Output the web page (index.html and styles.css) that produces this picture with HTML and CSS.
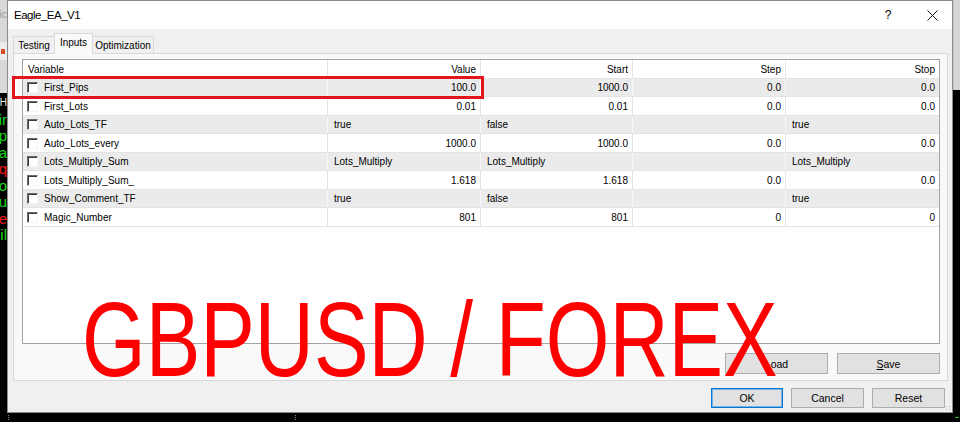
FILE: index.html
```html
<!DOCTYPE html>
<html>
<head>
<meta charset="utf-8">
<link rel="stylesheet" href="styles.css">
</head>
<body>
<div class="screen">
  <div class="main">
    <div class="strip-left">
      <div class="chrome-l">
        <div class="cl-text">ic</div>
        <div class="cl-bar"><span class="cl-icon"></span></div>
      </div>
      <div class="chart-text">
        <div class="ct"><span class="w sm">H</span></div>
        <div class="ct"><span class="g">ir</span></div>
        <div class="ct"><span class="g">p</span></div>
        <div class="ct"><span class="g">a</span></div>
        <div class="ct"><span class="r">q</span></div>
        <div class="ct"><span class="g">o</span></div>
        <div class="ct"><span class="g">u</span></div>
        <div class="ct"><span class="r">e</span></div>
        <div class="ct"><span class="g">il</span></div>
      </div>
    </div>

    <div class="dialog">
      <div class="titlebar">
        <div class="title">Eagle_EA_V1</div>
        <div class="cap-btn help">?</div>
        <div class="cap-btn close">
          <svg width="11" height="11" viewBox="0 0 11 11"><path d="M0.5 0.5 L10.5 10.5 M10.5 0.5 L0.5 10.5" stroke="#111" stroke-width="1" fill="none"/></svg>
        </div>
      </div>
      <div class="dbody">
        <div class="tabs">
          <div class="tab t-testing">Testing</div>
          <div class="tab active t-inputs">Inputs</div>
          <div class="tab t-opt">Optimization</div>
        </div>
        <div class="panel">
          <div class="grid-box">
            <div class="row head">
              <div class="c">Variable</div>
              <div class="c r">Value</div>
              <div class="c r">Start</div>
              <div class="c r">Step</div>
              <div class="c r last">Stop</div>
            </div>
            <div class="row odd">
              <div class="c var"><span class="cb"></span>First_Pips</div>
              <div class="c r">100.0</div>
              <div class="c r">1000.0</div>
              <div class="c r">0.0</div>
              <div class="c r last">0.0</div>
            </div>
            <div class="row even">
              <div class="c var"><span class="cb"></span>First_Lots</div>
              <div class="c r">0.01</div>
              <div class="c r">0.01</div>
              <div class="c r">0.0</div>
              <div class="c r last">0.0</div>
            </div>
            <div class="row odd">
              <div class="c var"><span class="cb"></span>Auto_Lots_TF</div>
              <div class="c">true</div>
              <div class="c">false</div>
              <div class="c"></div>
              <div class="c last">true</div>
            </div>
            <div class="row even">
              <div class="c var"><span class="cb"></span>Auto_Lots_every</div>
              <div class="c r">1000.0</div>
              <div class="c r">1000.0</div>
              <div class="c r">0.0</div>
              <div class="c r last">0.0</div>
            </div>
            <div class="row odd">
              <div class="c var"><span class="cb"></span>Lots_Multiply_Sum</div>
              <div class="c">Lots_Multiply</div>
              <div class="c">Lots_Multiply</div>
              <div class="c"></div>
              <div class="c last">Lots_Multiply</div>
            </div>
            <div class="row even">
              <div class="c var"><span class="cb"></span>Lots_Multiply_Sum_</div>
              <div class="c r">1.618</div>
              <div class="c r">1.618</div>
              <div class="c r">0.0</div>
              <div class="c r last">0.0</div>
            </div>
            <div class="row odd">
              <div class="c var"><span class="cb"></span>Show_Comment_TF</div>
              <div class="c">true</div>
              <div class="c">false</div>
              <div class="c"></div>
              <div class="c last">true</div>
            </div>
            <div class="row even">
              <div class="c var"><span class="cb"></span>Magic_Number</div>
              <div class="c r">801</div>
              <div class="c r">801</div>
              <div class="c r">0</div>
              <div class="c r last">0</div>
            </div>
            <div class="hl-box"></div>
          </div>
          <div class="panel-btns">
            <div class="btn wide"><u>L</u>oad</div>
            <div class="btn wide"><u>S</u>ave</div>
          </div>
        </div>
        <div class="dlg-btns">
          <div class="btn ok">OK</div>
          <div class="btn mid">Cancel</div>
          <div class="btn mid">Reset</div>
        </div>
      </div>
      <div class="grip"></div>
    </div>

    <div class="strip-right">
      <div class="chrome-r"></div>
    </div>
  </div>
  <div class="bottom">
    <span class="dot d1"></span>
    <span class="dot d2"></span>
    <span class="gdash"></span>
  </div>

  <div class="big">GBPUSD / FOREX</div>
</div>
</body>
</html>
```

FILE: styles.css
```css
html, body {
  margin: 0;
  padding: 0;
}
body {
  background: #000;
  width: 960px;
  height: 422px;
  overflow: hidden;
  font-family: "Liberation Sans", Arial, sans-serif;
  color: #000;
}
.screen {
  position: relative;
  width: 960px;
  height: 422px;
  display: flex;
  flex-direction: column;
}
.main {
  display: flex;
  height: 413px;
}

/* left background strip */
.strip-left {
  width: 7px;
  display: flex;
  flex-direction: column;
  overflow: hidden;
}
.chrome-l {
  height: 93px;
  background: #d9d9d9;
  display: flex;
  flex-direction: column;
}
.cl-text {
  height: 28px;
  display: flex;
  justify-content: flex-end;
  align-items: center;
  font-size: 11px;
  color: #9a9a9a;
}
.cl-bar {
  margin-top: 14px;
  height: 18px;
  background: #ececec;
  display: flex;
  align-items: center;
}
.cl-icon {
  width: 4px;
  height: 5px;
  margin-left: 1px;
  background: #d84a20;
}
.chart-text {
  flex: 1;
  background: #000;
  padding-top: 2px;
  display: flex;
  flex-direction: column;
}
.ct {
  height: 16.5px;
  display: flex;
  justify-content: flex-end;
  font-size: 15px;
  line-height: 16.5px;
  white-space: nowrap;
}
.ct .g { color: #19d819; }
.ct .r { color: #f01818; }
.ct .w { color: #e8e8e8; }
.ct .sm { font-size: 10px; }

/* dialog */
.dialog {
  position: relative;
  width: 946px;
  height: 413px;
  box-sizing: border-box;
  border: 1px solid #8a8a8a;
  background: #f0f0f0;
  display: flex;
  flex-direction: column;
}
.titlebar {
  height: 28px;
  background: #fff;
  display: flex;
  align-items: center;
  padding-left: 6px;
}
.title {
  flex: 1;
  font-size: 11.5px;
  letter-spacing: -0.5px;
  color: #000;
}
.cap-btn {
  height: 28px;
  display: flex;
  align-items: center;
  justify-content: center;
}
.help {
  width: 48px;
  font-size: 12px;
}
.close {
  width: 40px;
}
.dbody {
  flex: 1;
  display: flex;
  flex-direction: column;
}

/* tabs */
.tabs {
  position: relative;
  z-index: 1;
  display: flex;
  align-items: flex-end;
  height: 20px;
  margin: 4px 0 0 5px;
}
.tab {
  height: 17px;
  box-sizing: border-box;
  border: 1px solid #d9d9d9;
  border-bottom: none;
  background: #f0f0f0;
  font-size: 10px;
  display: flex;
  align-items: center;
  justify-content: center;
}
.t-testing { width: 42px; }
.t-inputs {
  width: 39px;
  margin-left: -1px;
}
.t-opt {
  width: 62px;
  margin-left: -1px;
}
.tab.active {
  height: 21px;
  margin-bottom: -1px;
  background: #f9f9f9;
  padding-bottom: 3px;
}

/* panel */
.panel {
  margin: 0 4px 0 5px;
  height: 328px;
  box-sizing: border-box;
  border: 1px solid #d9d9d9;
  background: #f9f9f9;
  padding: 5px 7px 6px 8px;
  display: flex;
  flex-direction: column;
}
.grid-box {
  position: relative;
  height: 285px;
  box-sizing: border-box;
  border: 1px solid #a3a3a3;
  background: #fff;
}
.row {
  display: grid;
  grid-template-columns: 305px 153px 152px 153px 1fr;
  box-sizing: border-box;
  border-bottom: 1px solid #e3e3e3;
}
.row.head {
  height: 19px;
  background: #fff;
}
.row.odd {
  height: 18px;
  background: #ebebeb;
}
.row.even {
  height: 19px;
  background: #fff;
}
.c {
  display: flex;
  align-items: center;
  padding: 0 4px 0 6px;
  font-size: 10px;
  white-space: nowrap;
  overflow: hidden;
  border-right: 1px solid #e4e4e4;
}
.row.odd .c {
  border-right-color: #f7f7f7;
}
.c.last {
  border-right: none;
}
.c.r {
  justify-content: flex-end;
}
.head .c:first-child {
  padding-left: 5px;
}
.c.var {
  padding-left: 4px;
  gap: 6px;
}
.cb {
  width: 11px;
  height: 11px;
  box-sizing: border-box;
  background: #fff;
  border: 1px solid;
  border-color: #6a6a6a #f4f4f4 #f4f4f4 #6a6a6a;
  box-shadow: inset 1px 1px 0 #3c3c3c;
  flex: none;
}
.hl-box {
  position: absolute;
  left: -11px;
  top: 16px;
  width: 472px;
  height: 23px;
  box-sizing: border-box;
  border: 3px solid #e3141c;
}

/* buttons */
.btn {
  box-sizing: border-box;
  background: #e1e1e1;
  border: 1px solid #adadad;
  font-size: 10.5px;
  display: flex;
  align-items: center;
  justify-content: center;
}
.btn u {
  text-decoration: underline;
}
.panel-btns {
  display: flex;
  justify-content: flex-end;
  gap: 9px;
  margin-top: 9px;
}
.btn.wide {
  width: 103px;
  height: 21px;
}
.dlg-btns {
  display: flex;
  justify-content: flex-end;
  gap: 8px;
  margin: 7px 7px 0 0;
}
.btn.ok {
  width: 72px;
  height: 20px;
  border-color: #0078d7;
  box-shadow: inset 0 0 0 1px rgba(0, 120, 215, 0.45);
}
.btn.mid {
  width: 73px;
  height: 20px;
}
.grip {
  position: absolute;
  right: 1px;
  bottom: 1px;
  width: 6px;
  height: 6px;
  background-image: radial-gradient(circle, #b8b8b8 0.8px, transparent 1px);
  background-size: 3px 3px;
}

/* right strip */
.strip-right {
  width: 7px;
  display: flex;
  flex-direction: column;
}
.chrome-r {
  height: 90px;
  background: #d6d6d6;
  border-left: 1px solid #c4c4c4;
}

/* bottom strip */
.bottom {
  position: relative;
  height: 9px;
  display: flex;
  align-items: center;
}
.dot {
  width: 1px;
  height: 6px;
  background-image: linear-gradient(#8a8a8a 50%, transparent 50%);
  background-size: 1px 2px;
}
.d1 { margin-left: 8px; }
.d2 { margin-left: 286px; }
.gdash {
  width: 4px;
  height: 1px;
  background: #24c024;
  margin-left: 659px;
}

/* overlay caption */
.big {
  position: absolute;
  left: 82px;
  top: 297px;
  font-family: "Liberation Sans", Arial, sans-serif;
  font-size: 106px;
  line-height: 0.8;
  color: #ff0000;
  white-space: nowrap;
  transform: scaleX(0.772);
  transform-origin: left top;
}
```
